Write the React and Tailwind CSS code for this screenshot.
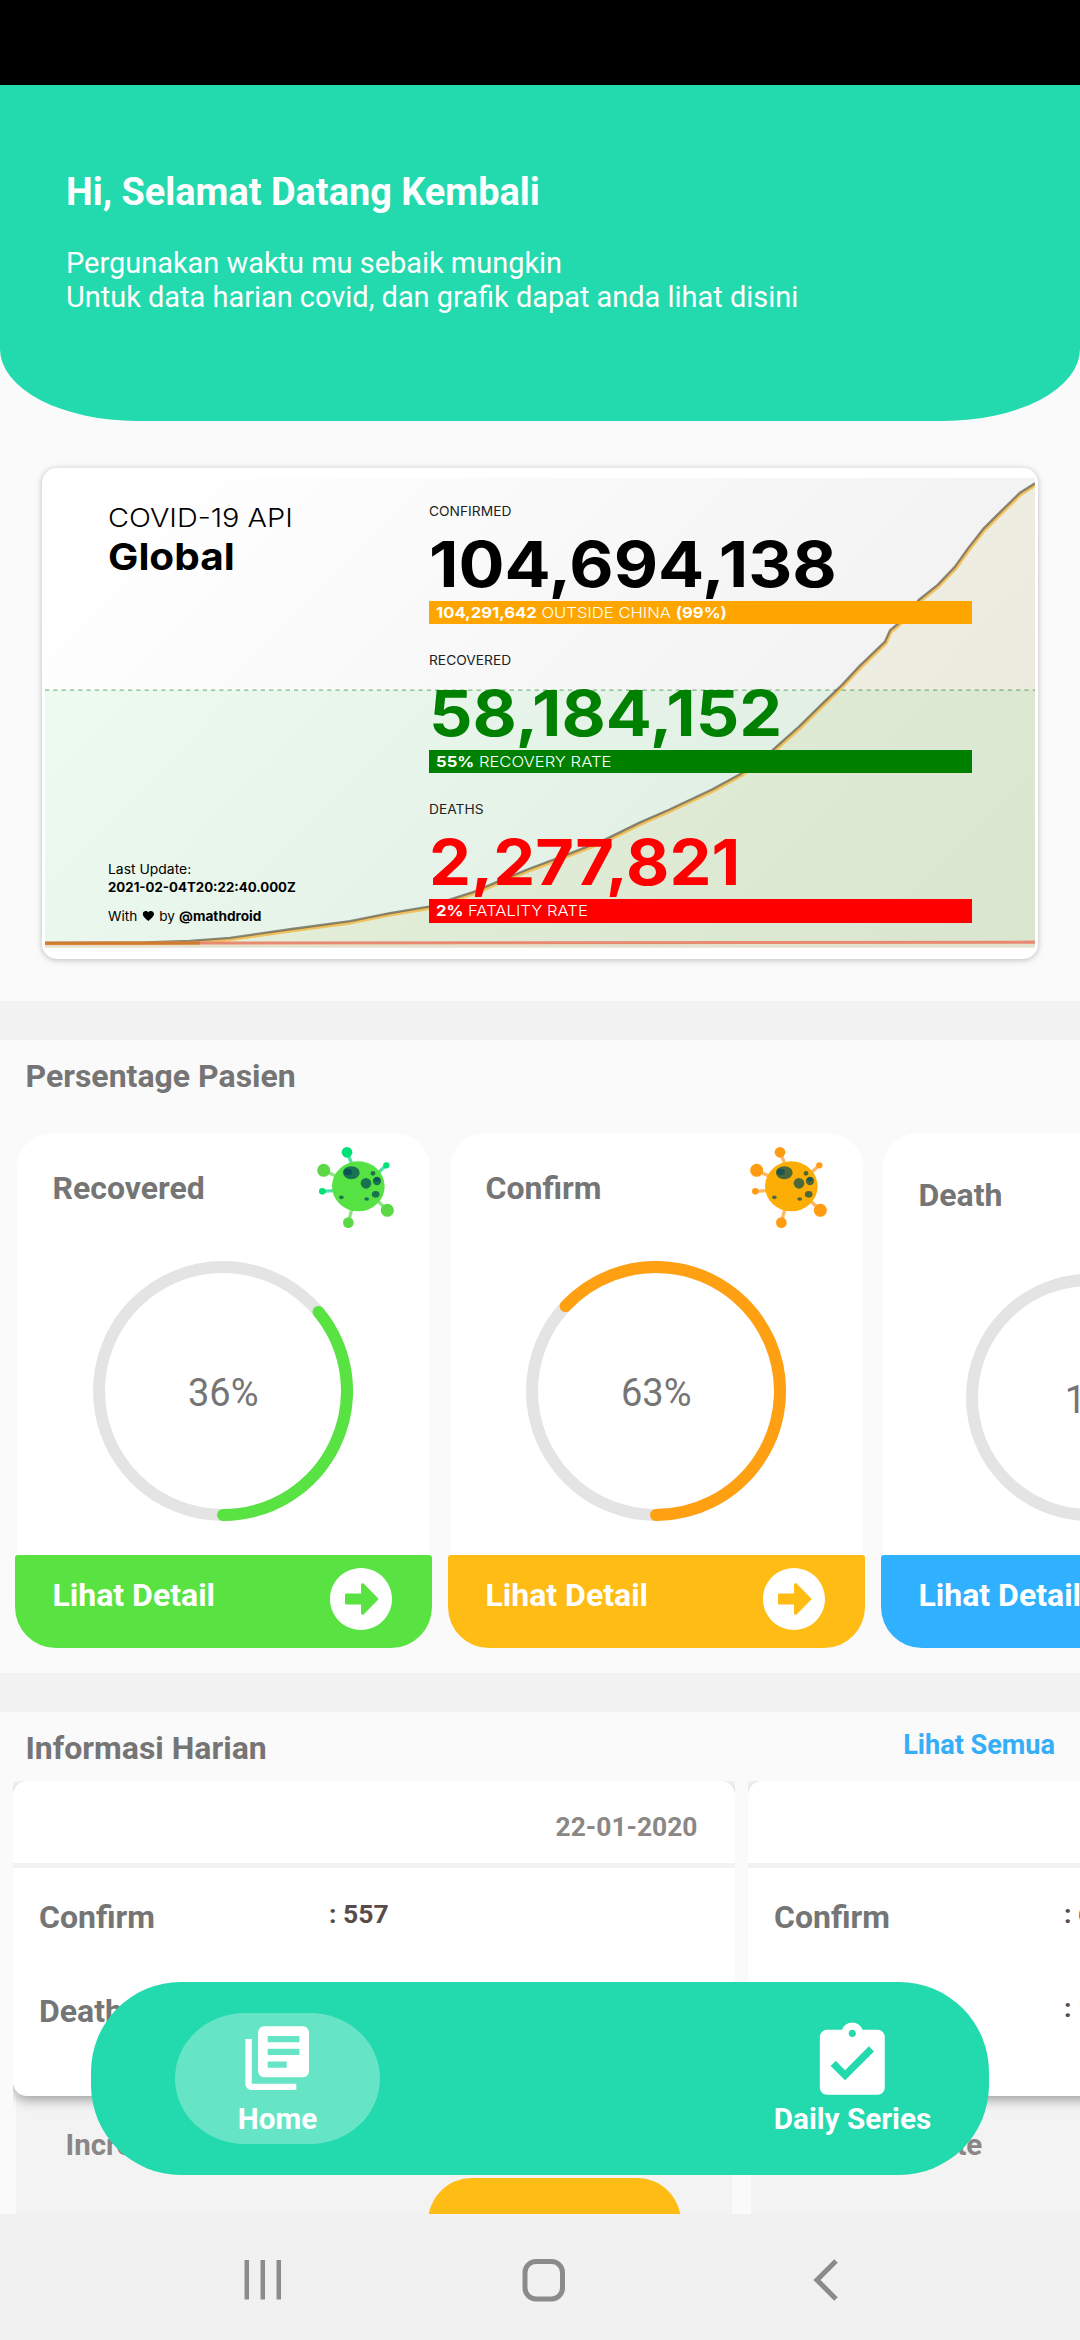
import React from "react";
import { FaArrowAltCircleRight } from "react-icons/fa";
import { MdLibraryBooks, MdAssignmentTurnedIn } from "react-icons/md";

const CURVE =
  "0,459 100,458.6 145,457 185,454 245,445.5 305,437.5 345,429.5 384,423.2 407,415.5 429,408.5 455,397.5 485,385.5 520,372.5 559,357.5 594,340.5 624,327.5 667,307.5 695,292.5 727,269.2 754,245.5 775.6,224.5 797,204.2 814.7,185.5 840,161.5 845,150.5 853.7,143.2 874,120.2 892.7,105.5 910,87.5 923,69.5 938,50.5 955.6,33.2 975,14.5 990,5.2";

function GlobalChart() {
  return (
    <svg className="absolute inset-0" width="990" height="469.5" viewBox="0 0 990 463.5" preserveAspectRatio="none">
      <defs>
        <linearGradient id="paper" gradientUnits="userSpaceOnUse" x1="180" y1="-80" x2="810" y2="545">
          <stop offset="0" stopColor="#ffffff" />
          <stop offset="1" stopColor="#eeeeee" />
        </linearGradient>
      </defs>
      <rect width="990" height="463.5" fill="url(#paper)" />
      <rect y="209.5" width="990" height="254" fill="rgb(0,200,40)" fillOpacity="0.062" />
      <polygon points={`0,463.5 ${CURVE} 990,463.5`} fill="rgb(190,170,40)" fillOpacity="0.085" />
      <line x1="0" y1="209.5" x2="990" y2="209.5" stroke="#008000" strokeOpacity="0.5" strokeWidth="1.2" strokeDasharray="4.2 4.1" />
      <polyline points={CURVE} transform="translate(0.9 1.6)" fill="none" stroke="#f3b63f" strokeOpacity="0.8" strokeWidth="3.2" strokeLinejoin="round" />
      <polyline points={CURVE} fill="none" stroke="#5f5a4c" strokeOpacity="0.7" strokeWidth="2.3" strokeLinejoin="round" />
      <rect y="461" width="990" height="2.5" fill="#e5e1cc" />
      <line x1="0" y1="459.3" x2="990" y2="458.2" stroke="#e88a72" strokeWidth="3" />
      <line x1="0" y1="459.3" x2="155" y2="459" stroke="#cf7c2c" strokeWidth="3" />
    </svg>
  );
}

function Stat({ label, value, tone, bar, children }) {
  return (
    <div className="flex h-[149.1px] shrink-0 flex-col items-start">
      <div className="mb-[13.5px] origin-left scale-x-[1.06] text-[13px] leading-4 text-[#222]">{label}</div>
      <div className={`origin-left text-[63px] font-bold leading-[62px] ${tone}`}>{value}</div>
      <div className={`mt-[6.3px] flex h-[23.4px] w-[542.5px] items-center pl-[6.5px] ${bar}`}>
        <div className="origin-left scale-x-[1.11] whitespace-pre text-[15px] font-light leading-5 text-white">{children}</div>
      </div>
    </div>
  );
}

function GlobalCard() {
  return (
    <div className="ml-[42px] mt-[47px] h-[491px] w-[995.5px] rounded-[15px] bg-white px-[3px] pt-[10px] shadow-[0_1px_6px_rgba(0,0,0,0.25)]">
      <div className="relative h-[469.5px] w-[990px] font-[Inter,sans-serif]">
        <GlobalChart />
        <div className="relative flex h-full">
          <div className="flex w-[384px] flex-col items-start pb-[22.8px] pl-[63px] pt-[25.2px] text-black">
            <div className="origin-left scale-x-[1.11] text-[26px] font-light leading-[30px]">COVID-19 API</div>
            <div className="mt-[2px] origin-left scale-x-[1.08] text-[37.5px] font-bold leading-[44px]">Global</div>
            <div className="mt-auto origin-left scale-x-[1.07] text-[13px] leading-[18.3px]">Last Update:</div>
            <div className="origin-left scale-x-[1.02] text-[13px] font-bold leading-[18.3px]">2021-02-04T20:22:40.000Z</div>
            <div className="mt-[10px] flex origin-left scale-x-[1.05] items-center text-[13px] leading-[18px]">
              <span>With</span>
              <svg className="mx-[5px]" width="10.8" height="10" viewBox="0 0 24 22">
                <path fill="#000" d="M12 22C6 17 0 12.500 0 6.800 0 3 2.800 0 6.500 0 8.700 0 10.800 1.100 12 3 13.200 1.100 15.300 0 17.500 0 21.200 0 24 3 24 6.800 24 12.500 18 17 12 22Z" />
              </svg>
              <span>by</span>
              <span className="ml-[4px] font-bold">@mathdroid</span>
            </div>
          </div>
          <div className="flex flex-col pt-[25.2px]">
            <Stat label="CONFIRMED" value="104,694,138" tone="scale-x-[1.085] text-black" bar="bg-[#ffa500]">
              <span className="font-bold">104,291,642</span> OUTSIDE CHINA <span className="font-bold">(99%)</span>
            </Stat>
            <Stat label="RECOVERED" value="58,184,152" tone="scale-x-[1.082] text-[#008000]" bar="bg-[#008000]">
              <span className="font-bold">55%</span> RECOVERY RATE
            </Stat>
            <Stat label="DEATHS" value="2,277,821" tone="scale-x-[1.058] text-[#ff0000]" bar="bg-[#ff0000]">
              <span className="font-bold">2%</span> FATALITY RATE
            </Stat>
          </div>
        </div>
      </div>
    </div>
  );
}

function Virus({ body, a, b, stalkA, stalkB, spot, core }) {
  return (
    <svg width="110" height="107.3" viewBox="0 8 330 322">
      <g strokeWidth="10">
        <path d="M138 66L154 104M256 105L228 130M64 183L98 181" stroke={stalkA} />
        <path d="M68 120L106 138M259 240L230 212M142 277L152 238" stroke={stalkB} />
      </g>
      <g fill={a}>
        <circle cx="138" cy="66" r="16" />
        <circle cx="256" cy="105" r="9.500" />
        <circle cx="64" cy="183" r="10" />
      </g>
      <g fill={b}>
        <circle cx="68" cy="120" r="19.500" />
        <circle cx="259" cy="240" r="19.500" />
        <circle cx="142" cy="277" r="16" />
      </g>
      <ellipse cx="172" cy="168" rx="79" ry="75" fill={body} />
      <g fill={spot}>
        <ellipse cx="151" cy="127" rx="25" ry="19.500" />
        <circle cx="195" cy="159" r="16" />
        <circle cx="228" cy="152" r="12.500" />
        <circle cx="216" cy="129" r="7" />
        <ellipse cx="224" cy="192" rx="11.500" ry="10" />
        <ellipse cx="197" cy="206" rx="7" ry="5.500" />
        <ellipse cx="121" cy="201" rx="7" ry="5.500" />
      </g>
      <g fill={core}>
        <ellipse cx="140" cy="125" rx="12.500" ry="10" />
        <ellipse cx="228" cy="147" rx="8" ry="6.500" />
      </g>
    </svg>
  );
}

function Ring({ percent, color, size }) {
  const c = size / 2;
  const r = c - 6;
  const t = (percent / 100) * 2 * Math.PI;
  const x = c + r * Math.sin(t);
  const y = c + r * Math.cos(t);
  return (
    <div className="relative mx-auto w-fit">
      <svg className="block" width={size} height={size}>
        <circle cx={c} cy={c} r={r} fill="none" stroke="#e4e4e4" strokeWidth="12" />
        <path d={`M${c} ${c + r}A${r} ${r} 0 ${percent > 50 ? 1 : 0} 0 ${x} ${y}`} fill="none" stroke={color} strokeWidth="12" strokeLinecap="round" />
      </svg>
      <div className="absolute inset-0 flex items-center justify-center pt-[5px] text-[38px] leading-[44px] text-[#757575]">{percent}%</div>
    </div>
  );
}

function PatientCard({ title, percent, color, footer, virus, size = 260, head, gap }) {
  return (
    <div className="w-[416.5px] shrink-0">
      <div className="mx-[1.5px] h-[422.3px] rounded-t-[35px] bg-white">
        <div className={`flex h-[107.3px] items-start justify-between pl-[36px] pr-[19px] ${gap}`}>
          <h3 className={`text-[32px] font-bold leading-[38px] text-[#757575] ${head}`}>{title}</h3>
          {virus && <Virus {...virus} />}
        </div>
        <Ring percent={percent} color={color} size={size} />
      </div>
      <div className={`flex h-[92.7px] items-start justify-between rounded-b-[41px] rounded-t-[3px] pl-[37.5px] pr-[38.5px] ${footer}`}>
        <span className="mt-[21px] text-[32px] font-bold leading-[38px] text-white">Lihat Detail</span>
        <span className="mt-[12.5px] text-white">
          <FaArrowAltCircleRight size={64} />
        </span>
      </div>
    </div>
  );
}

function DailyCard({ date, confirm, death }) {
  return (
    <div className="w-[722px] shrink-0">
      <div className="relative h-[314.7px] rounded-[14px] bg-white shadow-[0_4px_12px_rgba(0,0,0,0.35)] [clip-path:inset(0_0_-30px_0)]">
        <div className="flex h-[82px] items-center justify-end pr-[37.5px] pt-[9px] text-[26.4px] font-bold leading-8 text-[#8b8785]">{date}</div>
        <div className="h-[5px] bg-[#f2f2f2]" />
        {[["Confirm", confirm], ["Death", death]].map(([k, v]) => (
          <div key={k} className="flex h-[94.3px] items-center pl-[26px] pt-[4px] font-bold">
            <span className="w-[290px] text-[32px] leading-[38px] text-[#757575]">{k}</span>
            <span className="mb-[7px] text-[26.5px] leading-8 text-[#5a4a4a]">: {v}</span>
          </div>
        ))}
      </div>
      <div className="mx-[3px] h-[200px] bg-[#f3f3f3] pl-[49.5px] pt-[31.5px]">
        <div className="text-[29.5px] font-bold leading-9 text-[#8b8685]">Increase Rate</div>
        <div className="ml-[362px] mt-[14.5px] h-[90px] w-[253px] rounded-[44px] bg-[#febc15]" />
      </div>
    </div>
  );
}

const GREEN_VIRUS = { body: "#57e243", a: "#00e078", b: "#5ad846", stalkA: "#4fe3a4", stalkB: "#8ee680", spot: "#1a7350", core: "#0a5457" };
const ORANGE_VIRUS = { body: "#fdae04", a: "#ff9c12", b: "#ff9c12", stalkA: "#ffb765", stalkB: "#ffb765", spot: "#4b683b", core: "#1f5450" };

export default function App() {
  return (
    <div className="relative flex h-[2340px] w-[1080px] flex-col overflow-hidden bg-[#fafafa] font-[Roboto,sans-serif]">
      <div className="h-[85px] shrink-0 bg-black" />
      <main className="h-[2129px] shrink-0 overflow-hidden">
        <header className="h-[336px] rounded-b-[137px_72px] bg-[#23d9ae] pl-[66px] pt-[85px] text-white">
          <h1 className="text-[37.9px] font-bold leading-[44px]">Hi, Selamat Datang Kembali</h1>
          <p className="mt-[31.5px] text-[28.95px] leading-[34px]">
            Pergunakan waktu mu sebaik mungkin
            <br />
            Untuk data harian covid, dan grafik dapat anda lihat disini
          </p>
        </header>

        <GlobalCard />

        <div className="mt-[42px] h-[39px] bg-[#f2f2f2]" />
        <section className="h-[633px] pt-[17px]">
          <h2 className="pl-[25.5px] text-[32px] font-bold leading-[38px] text-[#757575]">Persentage Pasien</h2>
          <div className="mt-[37.7px] flex gap-[16.5px] overflow-hidden pl-[15px]">
            <PatientCard title="Recovered" percent={36} color="#59e343" footer="bg-[#59e343]" virus={GREEN_VIRUS} head="mt-[36.5px]" gap="mb-[21px]" />
            <PatientCard title="Confirm" percent={63} color="#ffa012" footer="bg-[#febc15]" virus={ORANGE_VIRUS} head="mt-[36.5px]" gap="mb-[21px]" />
            <PatientCard title="Death" percent={1} color="#2fb1ff" footer="bg-[#2fb1ff]" size={247} head="mt-[43.500px]" gap="mb-[34px]" />
          </div>
        </section>

        <div className="h-[39px] bg-[#f2f2f2]" />
        <section className="pt-[16px]">
          <div className="flex items-start justify-between pl-[25.5px] pr-[25px] font-bold">
            <h2 className="mt-[0.5px] h-[37.5px] text-[32px] leading-[38px] text-[#757575]">Informasi Harian</h2>
            <a className="mt-px text-[27.1px] leading-8 text-[#36adf7]">Lihat Semua</a>
          </div>
          <div className="mt-[15px] flex gap-[13px] pl-[13px]">
            <DailyCard date="22-01-2020" confirm="557" death="17" />
            <DailyCard date="23-01-2020" confirm="655" death="18" />
          </div>
        </section>
      </main>

      <nav className="absolute left-[91px] top-[1982px] flex h-[193px] w-[898px] items-start justify-between rounded-[90px] bg-[#23d9ae] pl-[84px] pr-[34px] pt-[30.7px] text-[29.7px] font-bold leading-[34px] text-white">
        <div className="flex h-[131.300px] w-[205px] flex-col items-center rounded-[70px_/_65.6px] bg-[#66e5c6] pt-[7.6px]">
          <MdLibraryBooks size={76.4} />
          <span className="mt-[5.5px]">Home</span>
        </div>
        <div className="flex h-[131.300px] w-[205px] flex-col items-center pt-[6px]">
          <MdAssignmentTurnedIn size={86.6} />
          <span className="-mt-[3.3px]">Daily Series</span>
        </div>
      </nav>

      <div className="h-[126px] shrink-0 bg-[#f1f1f1]">
        <svg className="block" width="1080" height="126" viewBox="0 2214 1080 126" fill="none" stroke="#8b8b8b" strokeWidth="4.500">
          <path d="M246.800 2260V2299.500M262.800 2260V2299.500M278.800 2260V2299.500" />
          <rect x="525" y="2261.500" width="37.500" height="37.500" rx="11" strokeWidth="5" />
          <path d="M836 2261L817 2280L836 2299" strokeWidth="5" />
        </svg>
      </div>
    </div>
  );
}
